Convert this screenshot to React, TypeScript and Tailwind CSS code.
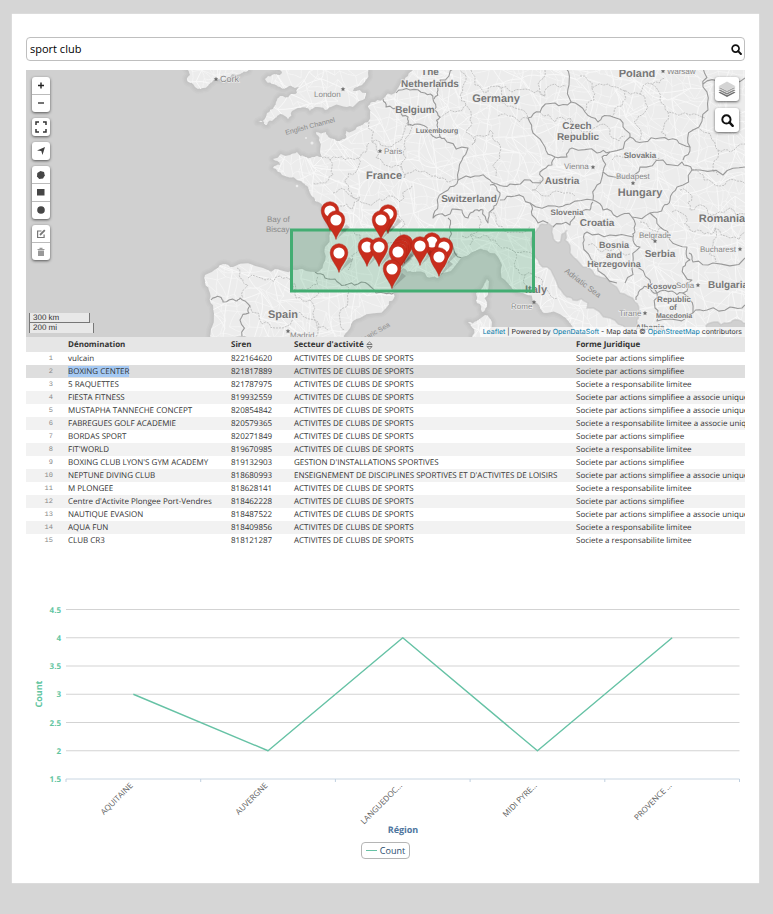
import React, { useState } from "react";

type Pt = [number, number];

/* ---------- geometry helpers ---------- */

function makeRandom(seed: number) {
  let s = seed;
  return () => {
    s = (s * 1664525 + 1013904223) % 4294967296;
    return s / 4294967296 - 0.5;
  };
}

function parse(text: string): Pt[] {
  return text
    .trim()
    .split(/\s+/)
    .map((p) => p.split(",").map(Number) as Pt);
}

/* Splits every segment in two, twice over, and shifts the midpoints a little. */
function roughen(text: string, amount = 0.22, seed = 7): string {
  const random = makeRandom(seed + text.length);
  let pts = parse(text);
  for (let pass = 0; pass < 2; pass++) {
    const next: Pt[] = [pts[0]];
    for (let i = 1; i < pts.length; i++) {
      const [ax, ay] = pts[i - 1];
      const [bx, by] = pts[i];
      const shift = random() * amount * 2;
      next.push([(ax + bx) / 2 - (by - ay) * shift, (ay + by) / 2 + (bx - ax) * shift], [bx, by]);
    }
    pts = next;
  }
  return "M" + pts.map((p) => p[0].toFixed(1) + " " + p[1].toFixed(1)).join("L");
}

function roadNetwork(step: number, seed: number): string {
  const random = makeRandom(seed);
  const cols = Math.ceil(580 / step);
  const rows = Math.ceil(290 / step);
  const grid: Pt[][] = [];
  for (let r = 0; r <= rows; r++) {
    const row: Pt[] = [];
    for (let c = 0; c <= cols; c++) {
      row.push([180 + c * step + random() * step, 62 + r * step + random() * step]);
    }
    grid.push(row);
  }
  let d = "";
  const link = (a: Pt, b: Pt) => {
    const mx = (a[0] + b[0]) / 2 + random() * step * 0.4;
    const my = (a[1] + b[1]) / 2 + random() * step * 0.4;
    d += `M${a[0].toFixed(1)} ${a[1].toFixed(1)}Q${mx.toFixed(1)} ${my.toFixed(1)} ${b[0].toFixed(1)} ${b[1].toFixed(1)}`;
  };
  for (let r = 0; r < rows; r++) {
    for (let c = 0; c < cols; c++) {
      if (random() < 0.35) link(grid[r][c], grid[r][c + 1]);
      if (random() < 0.35) link(grid[r][c], grid[r + 1][c]);
      if (random() < -0.1) link(grid[r][c], grid[r + 1][c + 1]);
    }
  }
  return d;
}

/* ---------- map data ---------- */

const land = [
  "186,68 190,75 187,80 193,84 198,89 203,88 212,82 222,80 232,74 248,71 249,68",
  "277,68 282,73 272,75 265,79 272,84 280,87 289,86 295,88 299,87 297,93 290,95 280,96 276,102 274,107 267,113 258,122 263,121 267,125 268,122 275,118 280,114 288,119 292,111 300,108 310,111 315,107 325,110 333,106 347,107 357,103 365,98 366,93 353,91 362,85 368,73 368,68",
  "413,68 408,76 400,85 395,93 383,99 372,102 368,107 368,122 357,127 346,131 346,138 340,141 330,138 326,132 316,132 319,140 322,157 312,157 305,157 297,152 290,155 273,159 280,165 273,168 282,175 297,180 303,183 308,187 313,197 315,201 323,208 328,223 325,247 323,265 315,272 297,270 280,270 263,268 233,267 223,264 218,268 205,275 205,282 210,293 213,305 210,339 343,339 350,328 360,318 387,307 394,298 392,290 388,282 390,273 403,268 413,272 427,277 437,278 447,272 458,262 477,250 490,253 502,265 505,280 523,293 537,303 547,313 570,323 590,339 750,339 750,66 440,66",
  "487,279 488,290 487,307 482,312 477,303 476,293 483,287",
  "485,315 492,322 490,339 472,339 472,327 468,322 477,321",
].map((s) => roughen(s) + "Z");

const inlandSea = [
  "548,223 540,225 534,233 535,257 547,267 557,283 567,297 573,300 588,303 587,308 610,318 627,330 630,339 640,339 637,323 638,313 635,302 620,293 600,277 583,267 570,253 565,240 567,230 562,234 558,243 552,233 553,227",
  "706,326 714,322 728,323 738,320 750,322 750,340 708,340",
].map((s) => roughen(s, 0.2) + "Z");

const borders = [
  "315,272 325,278 335,279 345,285 358,284 371,287 384,293 394,293",
  "211,300 220,297 223,302 236,301 240,298 250,306 249,313 240,320 242,337",
  "383,99 386,107 400,111 408,117 408,125 417,124 428,131 440,137 447,142 468,148 462,160 458,180",
  "396,93 410,90 425,93 433,99 434,110 440,117 437,125 440,137",
  "455,68 440,80 438,90 434,99",
  "458,180 475,176 490,180 497,184 510,184 530,180 543,180 540,172 552,165 555,157",
  "458,180 448,190 438,205 433,218 445,216 462,210 468,218 475,210 483,210 488,223 492,210 497,203 500,193 490,185",
  "500,200 515,196 530,203 555,206 570,204 593,200",
  "448,218 450,230 452,245 462,258",
  "566,68 569,85 571,102 555,103 540,112 528,118 533,133 545,147 555,157 567,157 572,148 597,153 610,152 630,137",
  "571,102 585,112 598,122 602,117 613,117 623,127 630,137 643,142 660,138 677,140 690,147 693,130 708,110 703,87 703,68",
  "703,84 722,80 745,78",
  "610,152 602,157 603,172 627,177 640,167 663,160 682,162 692,170 723,175 745,167",
  "690,147 683,160",
  "603,172 597,185 593,200 603,210 617,217 632,217 650,213 663,207 670,200 677,187 692,170",
  "553,227 570,225 575,215 590,210 593,202",
  "530,203 532,215 548,223",
  "617,283 597,263 583,243 587,232 610,235 633,237 640,247 633,263 625,283",
  "632,217 635,232 633,237",
  "650,213 660,227 670,240 687,247 690,260 683,267 692,280 683,293 690,300 693,313",
  "689,253 693,262 713,263 745,258",
  "657,293 672,291 683,293",
  "693,313 677,320 657,321 655,308 657,293 650,287 640,290 636,300",
  "693,313 707,310 730,307 745,305",
  "633,266 650,280 657,293",
].map((s) => roughen(s, 0.25));

const regions = [
  "322,158 330,160 333,175 322,183 313,183",
  "330,160 345,160 358,158 366,152 369,143",
  "369,122 372,142 385,146 398,142 405,130 408,122",
  "358,158 356,172 345,180 348,190 360,197 352,209 340,206",
  "372,142 376,158 388,166 402,168 404,178",
  "333,193 345,190 358,200 375,202 385,199 400,202 403,192 412,186",
  "404,178 420,172 436,176 447,182 458,180",
  "408,122 404,145 406,158 402,168",
  "330,225 345,232 360,235 368,248 352,255 348,270",
  "368,248 385,246 398,240 405,225 398,210",
  "398,240 415,252 430,240 445,244",
  "237,268 240,278 248,285 243,298",
  "248,278 265,280 280,276 291,282 300,290 310,288 318,276",
  "291,282 296,298 310,300 318,290",
  "345,285 348,300 340,320 345,330",
  "310,300 314,318 328,330",
  "250,306 262,324 275,328 300,312 318,322 316,337",
  "471,70 475,85 488,92 498,86 512,92 530,90 545,96 555,84 566,86",
  "440,118 455,112 466,105 470,120 466,132 472,145 475,136 490,130 498,142 500,158 496,176",
  "498,116 512,116 528,118",
  "466,105 460,95 466,80 460,70",
  "498,86 500,102 515,108 528,118",
  "545,70 538,84 545,96",
  "580,76 592,88 608,84 622,90 640,94 652,84 665,78",
  "625,90 622,106 612,117",
  "640,94 645,112 634,122 640,140",
  "652,84 660,100 668,112 690,115 705,118",
  "668,112 664,126 666,138",
  "592,88 594,100 585,112",
  "540,112 555,122 570,118 580,130 590,132 604,124",
  "570,118 572,135 562,142",
  "604,124 612,138 625,136",
  "612,160 630,158 645,152 660,158",
  "692,130 712,140 718,150 730,152 745,144",
  "718,150 713,165 718,175",
  "692,170 704,180 720,186 735,180 745,184",
  "680,190 692,196 690,210 704,206 716,214 730,208 745,214",
  "672,212 686,216 690,230 704,234 715,228 730,238 745,232",
  "715,228 713,245 716,262",
  "540,180 532,190 545,196 560,192 575,196",
  "478,216 480,230 470,245",
  "490,212 498,226 512,232 530,226",
  "462,236 480,238 495,240 512,250 528,252 535,257",
  "512,250 515,268 525,275 526,285",
  "525,275 540,278 547,290 558,298",
  "588,245 602,252 616,246 630,254",
  "640,222 652,230 662,228",
].map((s) => roughen(s, 0.3));

interface MapLabel {
  text: string;
  x: number;
  y: number;
  size: number;
  rotate?: number;
}

const countries: MapLabel[] = [
  { text: "The", x: 430, y: 75, size: 10 },
  { text: "Netherlands", x: 430, y: 87, size: 10 },
  { text: "Germany", x: 496, y: 102, size: 11 },
  { text: "Belgium", x: 415, y: 113, size: 10 },
  { text: "Luxembourg", x: 437, y: 133, size: 7 },
  { text: "France", x: 384, y: 179, size: 11 },
  { text: "Switzerland", x: 469, y: 202, size: 10 },
  { text: "Poland", x: 637, y: 77, size: 11 },
  { text: "Czech", x: 577, y: 129, size: 10 },
  { text: "Republic", x: 578, y: 140, size: 10 },
  { text: "Slovakia", x: 640, y: 158, size: 8 },
  { text: "Austria", x: 562, y: 184, size: 10 },
  { text: "Hungary", x: 640, y: 196, size: 11 },
  { text: "Slovenia", x: 567, y: 215, size: 8 },
  { text: "Croatia", x: 597, y: 226, size: 10 },
  { text: "Romania", x: 722, y: 222, size: 11 },
  { text: "Bosnia", x: 614, y: 248, size: 9 },
  { text: "and", x: 614, y: 258, size: 9 },
  { text: "Herzegovina", x: 614, y: 267, size: 9 },
  { text: "Serbia", x: 660, y: 257, size: 10 },
  { text: "Bulgaria", x: 728, y: 288, size: 10 },
  { text: "Kosovo", x: 662, y: 289, size: 8 },
  { text: "Republic", x: 674, y: 302, size: 8 },
  { text: "of", x: 673, y: 310, size: 8 },
  { text: "Macedonia", x: 674, y: 318, size: 7 },
  { text: "Albania", x: 650, y: 330, size: 8 },
  { text: "Spain", x: 283, y: 318, size: 11 },
  { text: "Italy", x: 536, y: 293, size: 11 },
];

const cities: (MapLabel & { mark: Pt })[] = [
  { text: "Cork", x: 220, y: 82, size: 9, mark: [216, 79] },
  { text: "London", x: 314, y: 97, size: 8, mark: [343, 89] },
  { text: "Paris", x: 384, y: 154, size: 8, mark: [380, 151] },
  { text: "Warsaw", x: 667, y: 74, size: 8, mark: [663, 71] },
  { text: "Vienna", x: 564, y: 169, size: 8, mark: [593, 167] },
  { text: "Budapest", x: 616, y: 179, size: 8, mark: [633, 183] },
  { text: "Belgrade", x: 639, y: 238, size: 8, mark: [655, 241] },
  { text: "Bucharest", x: 700, y: 252, size: 8, mark: [740, 249] },
  { text: "Sofia", x: 676, y: 288, size: 8, mark: [698, 285] },
  { text: "Tiranë", x: 619, y: 316, size: 8, mark: [645, 313] },
  { text: "Madrid", x: 290, y: 338, size: 8, mark: [288, 331] },
  { text: "Rome", x: 511, y: 309, size: 8, mark: [534, 302] },
];

const waters: MapLabel[] = [
  { text: "English Channel", x: 286, y: 135, size: 7, rotate: -15 },
  { text: "Bay of", x: 267, y: 222, size: 8 },
  { text: "Biscay", x: 266, y: 232, size: 8 },
  { text: "Adriatic Sea", x: 564, y: 272, size: 8, rotate: 37 },
  { text: "Balearic Sea", x: 356, y: 346, size: 7, rotate: -30 },
];

const pins: Pt[] = [
  [330, 211], [388, 214], [336, 220], [381, 220],
  [432, 242], [404, 244], [402, 246], [420, 246], [367, 247], [379, 247],
  [444, 247], [400, 249], [398, 252], [339, 253], [439, 257], [392, 269],
];

const roadsFine = roadNetwork(11, 42);
const roadsWide = roadNetwork(24, 9);

function BaseMap() {
  return (
    <svg
      viewBox="26 70 719 267"
      preserveAspectRatio="xMidYMid slice"
      className="block h-full w-full font-['Liberation_Sans',sans-serif]"
      role="img"
      aria-label="Map of western and central Europe"
    >
      <defs>
        <clipPath id="land-clip">
          {land.map((d, i) => (
            <path key={i} d={d} />
          ))}
        </clipPath>
      </defs>
      <rect x="-400" y="0" width="1600" height="400" fill="#d0d0d0" />
      <g fill="none" stroke="#b8b8b8" strokeLinejoin="round">
        {land.map((d, i) => (
          <g key={i}>
            <path d={d} strokeWidth="9" opacity="0.12" />
            <path d={d} strokeWidth="6" opacity="0.18" />
            <path d={d} strokeWidth="3" opacity="0.25" />
          </g>
        ))}
      </g>
      <g fill="#ececec">
        {land.map((d, i) => (
          <path key={i} d={d} />
        ))}
        <circle cx="306" cy="138" r="1" />
        <circle cx="312" cy="143" r="1.5" />
        <circle cx="297" cy="186" r="1.3" />
      </g>
      <g clipPath="url(#land-clip)">
        <g fill="none" stroke="#f8f8f8">
          <path d={roadsFine} strokeWidth="0.6" />
          <path d={roadsWide} strokeWidth="1" />
        </g>
        <g fill="none" stroke="#bdbdbd" strokeWidth="0.9" strokeDasharray="2 1">
          {regions.map((d, i) => (
            <path key={i} d={d} />
          ))}
        </g>
        {inlandSea.map((d, i) => (
          <g key={i}>
            <path d={d} fill="#d0d0d0" />
            <path d={d} fill="none" stroke="#c2c2c2" strokeWidth="1.5" opacity="0.6" />
          </g>
        ))}
        <g fill="none" stroke="#9a9a9a" strokeWidth="1.1" strokeLinejoin="round">
          {borders.map((d, i) => (
            <path key={i} d={d} />
          ))}
        </g>
      </g>
      <g fill="#8a8a8a">
        {waters.map((l) => (
          <text key={l.text} x={l.x} y={l.y} fontSize={l.size} transform={`rotate(${l.rotate ?? 0} ${l.x} ${l.y})`}>
            {l.text}
          </text>
        ))}
      </g>
      <g fill="#858585" stroke="#f1f1f1" strokeWidth="1.2" paintOrder="stroke">
        {cities.map((l) => (
          <g key={l.text}>
            <text x={l.x} y={l.y} fontSize={l.size}>
              {l.text}
            </text>
            <path
              d={`M${l.mark[0]} ${l.mark[1] - 2.3}l.7 1.5 1.6.2-1.2 1.1.3 1.7-1.4-.9-1.4.9.3-1.7-1.2-1.1 1.6-.2z`}
              fill="#6e6e6e"
              stroke="none"
            />
          </g>
        ))}
      </g>
      <g fill="#777" stroke="#f1f1f1" strokeWidth="1.4" paintOrder="stroke" fontWeight="bold" textAnchor="middle">
        {countries.map((l, i) => (
          <text key={i} x={l.x} y={l.y} fontSize={l.size}>
            {l.text}
          </text>
        ))}
      </g>
      <rect
        x="291.5"
        y="230"
        width="242"
        height="61"
        fill="#2ca25f"
        fillOpacity="0.2"
        stroke="#43ad72"
        strokeWidth="3"
      />
      {pins.map(([x, y], i) => (
        <g key={i} transform={`translate(${x} ${y})`}>
          <path d="M1 19L10 4L14 7Z" fill="#000" opacity="0.15" />
          <path
            d="M0 19.5C-1.500 13-8.800 7-8.800-.5a8.800 8.800 0 0 1 17.600 0C8.800 7 1.500 13 0 19.500Z"
            fill="#c82d1d"
            stroke="#ae2417"
            strokeWidth="0.5"
          />
          <circle r="5.6" fill="#fff" />
        </g>
      ))}
    </svg>
  );
}

/* ---------- map controls ---------- */

function SearchIcon({ size }: { size: number }) {
  return (
    <svg width={size} height={size} viewBox="0 0 12 12" fill="none" stroke="#111" aria-hidden="true">
      <circle cx="5" cy="5" r="3.8" strokeWidth="1.8" />
      <path d="M7.8 7.8L10.8 10.9" strokeWidth="2.2" strokeLinecap="round" />
    </svg>
  );
}

const glyph = (children: React.ReactNode) => (
  <svg width="12" height="12" viewBox="0 0 12 12" aria-hidden="true">
    {children}
  </svg>
);

const toolGroups: { label: string; icon: React.ReactNode }[][] = [
  [
    { label: "Zoom in", icon: glyph(<path d="M6 2.500v6M3 5.500h6" stroke="#222" strokeWidth="1.4" />) },
    { label: "Zoom out", icon: glyph(<path d="M3 5h6" stroke="#444" strokeWidth="1.4" />) },
  ],
  [
    {
      label: "Full screen",
      icon: glyph(
        <path d="M1 4V1h3M8 1h3v3M11 8v3H8M4 11H1V8" fill="none" stroke="#333" strokeWidth="1.5" />,
      ),
    },
  ],
  [{ label: "Locate me", icon: glyph(<path d="M10 2L7.5 10L6.300 6L2 5.500Z" fill="#3f3f3f" />) }],
  [
    {
      label: "Draw a polygon",
      icon: glyph(<path d="M5.500 1.900L9 3L9.800 6.500L8 9.500L4.200 10L2 7.500L2.300 4Z" fill="#464646" />),
    },
    { label: "Draw a rectangle", icon: glyph(<path d="M2 2h7.500v6.500h-7.500z" fill="#464646" />) },
    { label: "Draw a circle", icon: glyph(<circle cx="6" cy="5" r="3.8" fill="#464646" />) },
  ],
  [
    {
      label: "Edit shapes",
      icon: glyph(
        <g fill="none" stroke="#777" strokeWidth="1.2">
          <path d="M6.5 3H2.600v6.500h6.500V6.500" />
          <path d="M5 7L9.800 2.200" strokeWidth="1.8" />
        </g>,
      ),
    },
    {
      label: "Delete shapes",
      icon: glyph(
        <g fill="#999">
          <path d="M3 4.500h6V10H3z" />
          <path d="M2.500 3h7v1h-7zM4.500 1.700h3v1.500h-3z" />
        </g>,
      ),
    },
  ],
];

function MapPanel() {
  return (
    <section className="relative h-[267px] w-full overflow-hidden bg-[#d0d0d0]">
      <BaseMap />
      <div className="absolute top-[7px] left-1.5 flex flex-col gap-1.5">
        {toolGroups.map((group, i) => (
          <div
            key={i}
            className="flex min-h-[18px] w-[18px] flex-col divide-y divide-[#bbb] overflow-hidden rounded-[3px] bg-white shadow-[0_1px_3px_rgba(0,0,0,0.6)]"
          >
            {group.map((tool) => (
              <button
                key={tool.label}
                type="button"
                aria-label={tool.label}
                className="box-content flex min-h-[17px] grow items-center justify-center"
              >
                {tool.icon}
              </button>
            ))}
          </div>
        ))}
      </div>
      <div className="absolute top-[7px] right-1.5 flex flex-col gap-[7px]">
        <button
          type="button"
          aria-label="Layers"
          className="flex size-6 items-center justify-center rounded-[3px] bg-white shadow-[0_1px_3px_rgba(0,0,0,0.6)]"
        >
          <svg width="18" height="18" viewBox="0 0 18 18" aria-hidden="true">
            <path d="M.5 12.500l8.500 4.500 8.500-4.500-1.500-.8-7 3.600-7-3.600z" fill="#6e6e6e" />
            <path d="M.5 10.200l8.500 4.500 8.500-4.500-1.500-.8-7 3.600-7-3.600z" fill="#858585" />
            <path d="M.5 8l8.500 4.500L17.500 8l-1.500-.8-7 3.600-7-3.600z" fill="#a5a5a5" />
            <path d="M9 1.500l8.500 4.700-8.500 4.600-8.500-4.600z" fill="#d4d4d4" />
          </svg>
        </button>
        <button
          type="button"
          aria-label="Search the map"
          className="flex size-6 items-center justify-center rounded-[3px] bg-white shadow-[0_1px_3px_rgba(0,0,0,0.6)]"
        >
          <SearchIcon size={13} />
        </button>
      </div>
      <div className="absolute bottom-1 left-[3px] flex flex-col items-start font-['Liberation_Sans',sans-serif] text-[8px] leading-[9px] text-[#333]">
        <div className="h-[10px] w-[61px] border-x border-b border-[#777] bg-white/50 pl-[3px]">300 km</div>
        <div className="h-[10px] w-[65px] border-x border-[#777] bg-white/50 pl-[3px]">200 mi</div>
      </div>
      <div className="absolute right-0 bottom-0 bg-white/70 px-[3px] font-['Inter','Liberation_Sans',sans-serif] text-[7px] leading-[10px] whitespace-nowrap text-[#333]">
        <a href="#leaflet" className="text-[#0078a8]">Leaflet</a> | Powered by{" "}
        <a href="#opendatasoft" className="text-[#0078a8]">OpenDataSoft</a> - Map data ©{" "}
        <a href="#openstreetmap" className="text-[#0078a8]">OpenStreetMap</a> contributors
      </div>
    </section>
  );
}

/* ---------- table ---------- */

const CLUBS = "ACTIVITES DE CLUBS DE SPORTS";
const SAS = "Societe par actions simplifiee";
const SARL = "Societe a responsabilite limitee";
const SASU = "Societe par actions simplifiee a associe unique";
const EURL = "Societe a responsabilite limitee a associe unique";

const rows: [string, string, string, string][] = [
  ["vulcain", "822164620", CLUBS, SAS],
  ["BOXING CENTER", "821817889", CLUBS, SAS],
  ["5 RAQUETTES", "821787975", CLUBS, SARL],
  ["FIESTA FITNESS", "819932559", CLUBS, SASU],
  ["MUSTAPHA TANNECHE CONCEPT", "820854842", CLUBS, SASU],
  ["FABREGUES GOLF ACADEMIE", "820579365", CLUBS, EURL],
  ["BORDAS SPORT", "820271849", CLUBS, SAS],
  ["FIT'WORLD", "819670985", CLUBS, SARL],
  ["BOXING CLUB LYON'S GYM ACADEMY", "819132903", "GESTION D'INSTALLATIONS SPORTIVES", SAS],
  ["NEPTUNE DIVING CLUB", "818680993", "ENSEIGNEMENT DE DISCIPLINES SPORTIVES ET D'ACTIVITES DE LOISIRS", SASU],
  ["M PLONGEE", "818628141", CLUBS, SARL],
  ["Centre d'Activite Plongee Port-Vendres", "818462228", CLUBS, SAS],
  ["NAUTIQUE EVASION", "818487522", CLUBS, SASU],
  ["AQUA FUN", "818409856", CLUBS, SARL],
  ["CLUB CR3", "818121287", CLUBS, SARL],
];

function ResultsTable() {
  return (
    <div className="overflow-hidden">
      <table className="w-full table-fixed text-left text-[8px] leading-[12px] whitespace-nowrap text-[#333]">
        <colgroup>
          <col className="w-[42px]" />
          <col className="w-[163px]" />
          <col className="w-[63px]" />
          <col className="w-[282px]" />
          <col />
        </colgroup>
        <thead>
          <tr className="h-[15px] bg-[#e6e6e6]">
            <th className="p-0" aria-label="Row" />
            <th className="p-0 pt-px font-bold">Dénomination</th>
            <th className="p-0 pt-px font-bold">Siren</th>
            <th className="p-0 pt-px font-bold">
              <span className="flex items-center gap-0.5">
                Secteur d'activité
                <svg width="7" height="9" viewBox="0 0 7 9" fill="none" stroke="#777" strokeWidth="1" aria-hidden="true">
                  <path d="M.8 3.500L3.500 1l2.700 2.500zM.8 5.500L3.500 8l2.700-2.500z" />
                </svg>
              </span>
            </th>
            <th className="p-0 pt-px font-bold">Forme Juridique</th>
          </tr>
        </thead>
        <tbody>
          {rows.map((row, i) => (
            <tr
              key={row[1]}
              className={"h-[13px] " + (i === 1 ? "bg-[#dedede]" : i % 2 === 1 ? "bg-[#f2f2f2]" : "bg-white")}
            >
              <td className="p-0 pr-[15px] text-right font-['Liberation_Mono',monospace] text-[7px] text-[#888]">
                {i + 1}
              </td>
              <td className="p-0 pt-px">
                {i === 1 ? <mark className="bg-[#a5c9f3] text-inherit">{row[0]}</mark> : row[0]}
              </td>
              <td className="p-0 pt-px">{row[1]}</td>
              <td className="p-0 pt-px">{row[2]}</td>
              <td className="p-0 pt-px">{row[3]}</td>
            </tr>
          ))}
        </tbody>
      </table>
    </div>
  );
}

/* ---------- chart ---------- */

const chartData = [
  { region: "AQUITAINE", count: 3 },
  { region: "AUVERGNE", count: 2 },
  { region: "LANGUEDOC…", count: 4 },
  { region: "MIDI PYRE…", count: 2 },
  { region: "PROVENCE …", count: 4 },
];
const plot = { left: 40, right: 713.5, top: 62.5, bottom: 232 };
const band = (plot.right - plot.left) / chartData.length;
const yFor = (v: number) => plot.bottom - ((v - 1.5) / 3) * (plot.bottom - plot.top);
const ticks = [4.5, 4, 3.5, 3, 2.5, 2, 1.5];

function CountChart() {
  return (
    <figure className="flex flex-col items-center">
      <svg viewBox="0 0 719 289" className="block w-full" role="img" aria-label="Count by region">
        {ticks.map((v) => (
          <g key={v}>
            <path
              d={`M${plot.left} ${yFor(v)}H${plot.right}`}
              stroke={v === 1.5 ? "#c9d6e2" : "#d3d3d3"}
              strokeWidth="1"
            />
            <text x="35" y={yFor(v) + 3} textAnchor="end" fontSize="8" fontWeight="bold" fill="#62c5a1">
              {v}
            </text>
          </g>
        ))}
        {[0, 1, 2, 3, 4, 5].map((i) => (
          <path key={i} d={`M${plot.left + i * band} ${plot.bottom}v3`} stroke="#c0d0e0" />
        ))}
        <polyline
          fill="none"
          stroke="#66c2a5"
          strokeWidth="1.4"
          strokeLinejoin="round"
          points={chartData.map((p, i) => `${plot.left + band * (i + 0.5)},${yFor(p.count)}`).join(" ")}
        />
        {chartData.map((p, i) => {
          const x = plot.left + band * (i + 0.5);
          return (
            <text key={p.region} x={x} y="239" textAnchor="end" fontSize="8" fill="#606060" transform={`rotate(-45 ${x} 239)`}>
              {p.region}
            </text>
          );
        })}
        <text x="16" y="147" textAnchor="middle" fontSize="9" fontWeight="bold" fill="#62c5a1" transform="rotate(-90 16 147)">
          Count
        </text>
        <text x="377" y="286" textAnchor="middle" fontSize="9" fontWeight="bold" fill="#4d759e">
          Région
        </text>
      </svg>
      <button
        type="button"
        className="mt-1.5 flex h-[17px] items-center gap-[3px] rounded-[4px] border border-[#b5b5b5] px-1 text-[9px] text-[#274b6d]"
      >
        <span className="h-px w-[11px] bg-[#66c2a5]" />
        Count
      </button>
    </figure>
  );
}

export default function App() {
  const [query, setQuery] = useState("sport club");
  return (
    <div className="min-h-screen bg-[#d6d6d6] pt-3.5 pr-3.5 pb-8 pl-3 font-['Open_Sans','Noto_Sans',sans-serif] [text-rendering:geometricPrecision]">
      <main className="bg-white px-3.5 pt-[23px] pb-6 shadow-[0_0_1px_rgba(255,255,255,0.9)]">
        <form
          className="mb-[9px] flex h-6 items-center rounded-[4px] border border-[#bfbfbf] bg-white pr-0.5"
          onSubmit={(e) => e.preventDefault()}
        >
          <input
            type="text"
            aria-label="Search"
            value={query}
            onChange={(e) => setQuery(e.target.value)}
            className="min-w-0 flex-1 px-[3px] text-[11px] leading-4 text-black outline-none"
          />
          <button type="submit" aria-label="Run search">
            <SearchIcon size={11} />
          </button>
        </form>
        <MapPanel />
        <ResultsTable />
        <CountChart />
      </main>
    </div>
  );
}
